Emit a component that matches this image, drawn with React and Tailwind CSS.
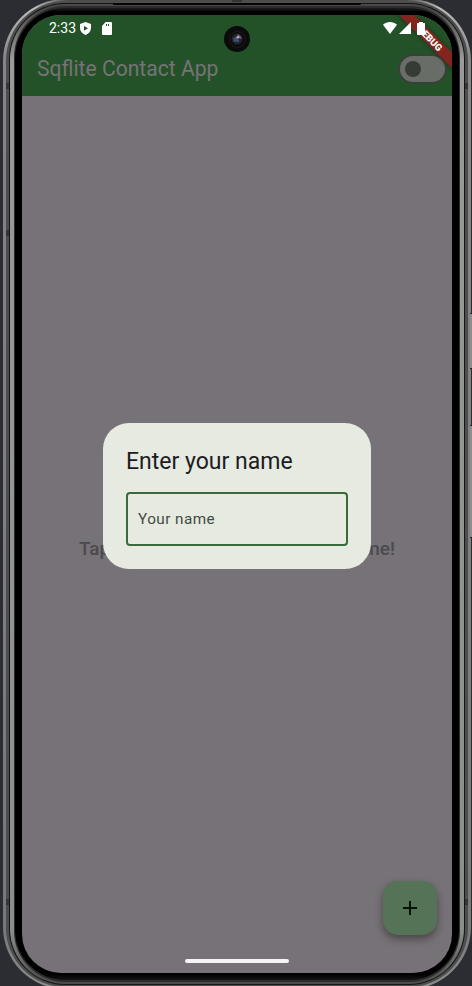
function StatusBar() {
  return (
    <div className="relative z-20 flex h-[26px] items-center pl-[27px] pr-[27px] text-white">
      <span className="text-[14px] leading-none">2:33</span>
      <svg className="ml-[4px]" width="11" height="13" viewBox="0 0 11 13">
        <path fill="#fff" d="M5.500 0 11 2v4c0 3.300-2.200 5.800-5.500 7C2.200 11.800 0 9.300 0 6V2z" />
        <path fill="#245228" d="M4 3.900 8 6.300 4 8.700z" />
      </svg>
      <svg className="ml-[11px]" width="10" height="13" viewBox="0 0 10 13">
        <path fill="#fff" d="M3.600 0H9a1 1 0 0 1 1 1v11a1 1 0 0 1-1 1H1a1 1 0 0 1-1-1V4z" />
        <path fill="#245228" d="M4 2h1v2H4zM6 2h1v2H6z" />
      </svg>
      <div className="ml-auto flex items-center">
        <svg width="14" height="12" viewBox="0 0 14 12">
          <path fill="#fff" d="M0 2.800C4-.800 10-.800 14 2.800L7 12z" />
        </svg>
        <svg className="ml-[2px]" width="12" height="12" viewBox="0 0 12 12">
          <path fill="#fff" d="M12 0v12H0z" />
        </svg>
        <svg className="ml-[6px]" width="8" height="13" viewBox="0 0 8 13">
          <path fill="#fff" d="M2 0h4v1h1.500l.5.500v11l-.5.500h-7L0 12.500v-11L.5 1H2z" />
        </svg>
      </div>
    </div>
  );
}

function Camera() {
  return (
    <div className="absolute left-[202px] top-[11px] z-20 flex size-[26px] items-center justify-center rounded-full bg-[#0b0b0c]">
      <div className="flex size-[17px] items-center justify-center rounded-full border border-[#1c1c1e] bg-[#0c0c0f]">
        <svg width="12" height="12" viewBox="0 0 12 12">
          <circle cx="6" cy="6" r="5.500" fill="#22222b" />
          <path d="M6 1.500a4.500 4.500 0 0 1 4.500 4.500L7 5z" fill="#7d5a8a" />
          <circle cx="4.800" cy="6.500" r="2.500" fill="#40505f" />
          <circle cx="6.800" cy="4.200" r="1.300" fill="#b9abc6" />
          <circle cx="7" cy="8" r="1.200" fill="#31568a" />
        </svg>
      </div>
    </div>
  );
}

function Screen() {
  return (
    <div className="relative flex h-full w-full flex-col overflow-hidden rounded-[39px] bg-[#777277]">
      <header className="h-[81px] shrink-0 bg-[#245228]">
        <StatusBar />
        <div className="flex h-[55px] items-center justify-between pl-[15px] pr-[5px]">
          <h1 className="scale-y-[1.040] whitespace-nowrap text-[21.100px] leading-none text-[#777277]">Sqflite Contact App</h1>
          <div className="flex h-[30px] w-[49px] shrink-0 items-center rounded-full border-2 border-[#3b3f3a] bg-[#696d67] pl-[5px]">
            <div className="size-[16px] rounded-full bg-[#363b35]" />
          </div>
        </div>
      </header>
      <div className="absolute left-[343px] top-[18px] z-10 flex h-[11.300px] w-[130px] rotate-45 items-center justify-center bg-[#84241f] text-[9.500px] font-black leading-none text-white shadow-[0_0_5px_rgba(0,0,0,0.4)]">
        DEBUG
      </div>
      <Camera />
      <main className="relative flex flex-1 flex-col items-center">
        <div className="mt-[440px] flex w-[316px] justify-between text-[19px] font-medium leading-[25px] text-[#4b4a4d]">
          <span>Tap</span>
          <span>name!</span>
        </div>
        <div className="absolute left-[81px] top-[327px] h-[146px] w-[268px] rounded-[26px] bg-[#e6eae0] px-[23px] pt-[25px]">
          <h2 className="scale-y-[1.030] text-[23px] leading-[28px] text-[#1b1c1f]">Enter your name</h2>
          <div className="mt-[16px] flex h-[54px] items-center rounded-[4px] border-2 border-[#3a6a3c] pl-[10px] text-[15.300px] tracking-[0.450px] text-[#454a43]">
            Your name
          </div>
        </div>
        <div className="absolute bottom-[38px] right-[15px] flex size-[54px] items-center justify-center rounded-[15px] bg-[#557356] shadow-[0_4px_8px_rgba(0,0,0,0.4)]">
          <svg width="14" height="14" viewBox="0 0 14 14">
            <path d="M7 0v14M0 7h14" stroke="#041105" strokeWidth="2" />
          </svg>
        </div>
        <div className="absolute bottom-[10px] left-[163px] h-[4px] w-[104px] rounded-full bg-[#f7f4f7]" />
      </main>
    </div>
  );
}

export default function App() {
  return (
    <div className="relative h-[986px] w-[472px] overflow-hidden bg-[#2c2d32] font-['Roboto',sans-serif]">
      <div className="-mt-px ml-[3px] h-[990px] w-[468px] rounded-[62px] bg-[linear-gradient(90deg,transparent_30px,#4b4b4b_65px,#4b4b4b_403px,transparent_438px),linear-gradient(#c5c5c5_0px,#858585_60px,#777978_930px,#8c8c8c_985px)] px-[3px] pb-[2px] pt-[2px] [background-size:100%_8px,100%_100%] [background-repeat:no-repeat]">
        <div className="h-full w-full rounded-[59px] bg-[#4b4e4d] px-[3px] pb-[2px] pt-[2px]">
          <div className="h-full w-full rounded-[56px] bg-[#151515] p-px">
            <div className="h-full w-full rounded-[55px] bg-[linear-gradient(#4b4b4b_0px,#444_4px,#9a9a9a_55px,#8d8d8d_925px,#4b4b4b_980px)] px-[4px] pb-[2px] pt-[2px]">
              <div className="h-full w-full rounded-[51px] bg-[#2c2c2c] px-px pb-[2px] pt-[2px]">
                <div className="h-full w-full rounded-[50px] bg-[linear-gradient(#1e1e1e_0px,#000_4px,#000_966px,#141414_972px)] px-[7px] pb-[7px] pt-[7px]">
                  <Screen />
                </div>
              </div>
            </div>
          </div>
        </div>
      </div>
      <div className="absolute left-[113px] top-[3px] h-[2px] w-[248px] rounded-full bg-[#050505]" />
      <div className="absolute left-[232px] top-0 h-[2px] w-[10px] bg-[#333]" />
      <div className="absolute left-[470px] top-[313px] h-[56px] w-[2px] border-y border-[#222] bg-[#8e8e8e]" />
      <div className="absolute left-[470px] top-[425px] h-[113px] w-[2px] border-y border-[#222] bg-[#8e8e8e]" />
      {[86, 233, 902].map((y) => (
        <div key={y} className="absolute left-[6px] flex w-[462px] justify-between" style={{ top: y - 3 }}>
          <div className="h-[6px] w-[3px] bg-[#343635]" />
          {y !== 233 && <div className="h-[6px] w-[3px] bg-[#343635]" />}
        </div>
      ))}
    </div>
  );
}
